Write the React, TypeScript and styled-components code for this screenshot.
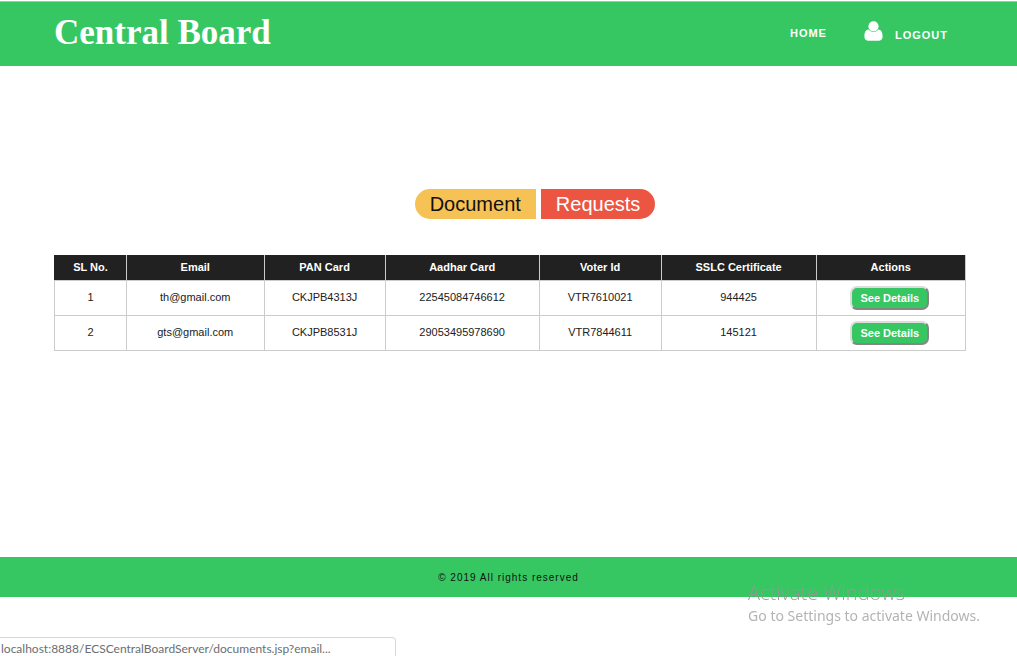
import React from "react";
import styled, { createGlobalStyle } from "styled-components";

const green = "#36c763";
const line = "#cccccc";

const GlobalStyle = createGlobalStyle`
  * { box-sizing: border-box; }
  body {
    margin: 0;
    background: #ffffff;
    color: #212121;
    font-family: "Liberation Sans", Arial, sans-serif;
    font-size: 11px;
    line-height: 16px;
  }
`;

const Page = styled.div`
  padding-top: 1px;
`;

const Header = styled.header`
  display: flex;
  align-items: center;
  justify-content: space-between;
  height: 65px;
  padding: 0 69px 2px 54px;
  border-top: 1px solid #b4beb8;
  background: ${green};
  color: #ffffff;
`;

const Brand = styled.h1`
  margin: 0;
  font-family: "Liberation Serif", "Times New Roman", serif;
  font-size: 35px;
  line-height: 40px;
  font-weight: 700;
`;

const Nav = styled.nav`
  display: flex;
  align-items: center;
  gap: 37px;
`;

const NavLink = styled.a`
  display: flex;
  align-items: flex-start;
  gap: 12px;
  color: #ffffff;
  font-weight: 700;
  letter-spacing: 1px;
  text-decoration: none;
  text-transform: uppercase;
`;

const LogoutText = styled.span`
  padding: 6px 0 2px;
`;

const Main = styled.main`
  padding: 123px 51px 206px 54px;
`;

const Title = styled.h2`
  display: flex;
  justify-content: center;
  gap: 5px;
  margin: 0 0 36px;
  padding-left: 50px;
  font-size: 20px;
  line-height: 30px;
  font-weight: 400;
`;

const TitlePart = styled.span<{ $side: "left" | "right" }>`
  padding: 0 15px;
  background: ${({ $side }) => ($side === "left" ? "#f6c155" : "#eb5542")};
  color: ${({ $side }) => ($side === "left" ? "#111111" : "#ffffff")};
  border-radius: ${({ $side }) => ($side === "left" ? "15px 0 0 15px" : "0 15px 15px 0")};
`;

const Table = styled.table`
  width: 100%;
  table-layout: fixed;
  border-collapse: collapse;
  text-align: center;
`;

const Col = styled.col<{ $share: number }>`
  width: ${({ $share }) => $share}%;
`;

const HeadCell = styled.th`
  height: 25px;
  padding: 0 0 2px;
  background: #212121;
  color: #ffffff;
  border: 1px solid ${line};
  border-top-color: #212121;
  &:first-child { border-left-color: #212121; }
`;

const Cell = styled.td`
  height: 35px;
  padding: 0 0 2px;
  border: 1px solid ${line};
`;

const ActionCell = styled(Cell)`
  padding: 0 2px 0 0;
`;

const DetailsButton = styled.button`
  display: block;
  height: 24px;
  margin: 0 auto;
  padding: 0 8px;
  border: 2px solid;
  border-color: #dddddd #858585 #858585 #dddddd;
  border-radius: 7px;
  background: ${green};
  color: #ffffff;
  font: inherit;
  font-weight: 700;
`;

const Footer = styled.footer`
  padding: 13px 0 11px;
  background: ${green};
  color: #111111;
  font-size: 10px;
  text-align: center;
  letter-spacing: 1px;
`;

const Watermark = styled.aside`
  position: fixed;
  right: 37px;
  bottom: 28px;
  color: rgba(160, 160, 160, 0.8);
  font-family: "Noto Sans", sans-serif;
  font-size: 14px;
  line-height: 24px;
`;

const WatermarkTitle = styled.div`
  color: rgba(150, 150, 150, 0.95);
  font-family: "Open Sans", sans-serif;
  font-size: 20px;
  line-height: 22px;
  font-weight: 300;
`;

const StatusBar = styled.div`
  position: fixed;
  left: 0;
  bottom: 0;
  width: 396px;
  height: 19px;
  padding: 3px 1px 0;
  border: 1px solid #d8d8d8;
  border-width: 1px 1px 0 0;
  border-top-right-radius: 4px;
  background: #ffffff;
  color: #6b6e72;
  font-family: Lato, sans-serif;
  font-size: 12px;
  white-space: nowrap;
`;

const columns = [
  { name: "SL No.", share: 7.9 },
  { name: "Email", share: 15.1 },
  { name: "PAN Card", share: 13.3 },
  { name: "Aadhar Card", share: 16.9 },
  { name: "Voter Id", share: 13.4 },
  { name: "SSLC Certificate", share: 17 },
  { name: "Actions", share: 16.4 },
];

const requests = [
  ["1", "th@gmail.com", "CKJPB4313J", "22545084746612", "VTR7610021", "944425"],
  ["2", "gts@gmail.com", "CKJPB8531J", "29053495978690", "VTR7844611", "145121"],
];

const UserIcon = () => (
  <svg width="19" height="20" viewBox="0 0 19 20" fill="#ffffff" aria-hidden="true">
    <path d="M4.700 8.600C1.700 8.800.4 11.500.4 15.600c0 2.500 1.300 4.100 3.500 4.100h11.200c2.200 0 3.500-1.600 3.500-4.100 0-4.100-1.300-6.800-4.300-7-1.200 1.500-2.800 2.300-4.800 2.300s-3.600-.8-4.800-2.300z" />
    <circle cx="9.500" cy="5.300" r="5.100" />
  </svg>
);

export default function App() {
  return (
    <Page>
      <GlobalStyle />
      <Header>
        <Brand>Central Board</Brand>
        <Nav>
          <NavLink href="#home">Home</NavLink>
          <NavLink href="#logout">
            <UserIcon />
            <LogoutText>Logout</LogoutText>
          </NavLink>
        </Nav>
      </Header>
      <Main>
        <Title>
          <TitlePart $side="left">Document</TitlePart>
          <TitlePart $side="right">Requests</TitlePart>
        </Title>
        <Table>
          <colgroup>
            {columns.map((c) => (
              <Col key={c.name} $share={c.share} />
            ))}
          </colgroup>
          <thead>
            <tr>
              {columns.map((c) => (
                <HeadCell key={c.name} scope="col">{c.name}</HeadCell>
              ))}
            </tr>
          </thead>
          <tbody>
            {requests.map((row) => (
              <tr key={row[0]}>
                {row.map((value) => (
                  <Cell key={value}>{value}</Cell>
                ))}
                <ActionCell>
                  <DetailsButton type="button">See Details</DetailsButton>
                </ActionCell>
              </tr>
            ))}
          </tbody>
        </Table>
      </Main>
      <Footer>© 2019 All rights reserved</Footer>
      <Watermark>
        <WatermarkTitle>Activate Windows</WatermarkTitle>
        Go to Settings to activate Windows.
      </Watermark>
      <StatusBar>localhost:8888/ECSCentralBoardServer/documents.jsp?email...</StatusBar>
    </Page>
  );
}
